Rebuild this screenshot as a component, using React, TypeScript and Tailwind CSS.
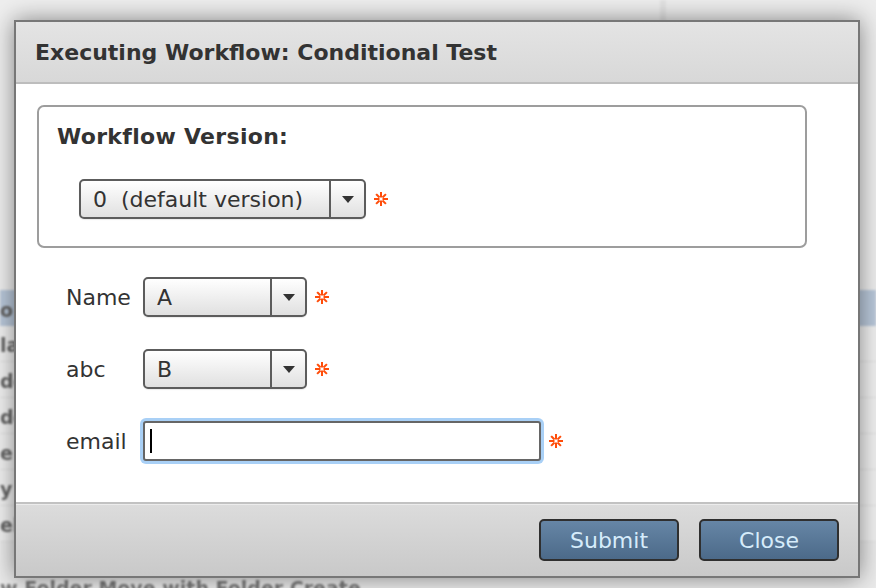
import React from 'react';

const font = { fontFamily: '"DejaVu Sans", Verdana, sans-serif' };

function Required() {
  return (
    <svg width="14" height="14" viewBox="0 0 14 14" className="ml-[8px] shrink-0">
      <g stroke="#ff4d0a" strokeWidth="2" strokeLinecap="square">
        <line x1="7" y1="1" x2="7" y2="4.5" />
        <line x1="7" y1="9.5" x2="7" y2="13" />
        <line x1="1" y1="7" x2="4.5" y2="7" />
        <line x1="9.5" y1="7" x2="13" y2="7" />
        <line x1="2.8" y1="2.8" x2="4.8" y2="4.8" />
        <line x1="9.2" y1="9.2" x2="11.2" y2="11.2" />
        <line x1="11.2" y1="2.8" x2="9.2" y2="4.8" />
        <line x1="4.8" y1="9.2" x2="2.8" y2="11.2" />
      </g>
    </svg>
  );
}

function Select({ value, width }: { value: string; width: string }) {
  return (
    <div className={`flex h-[40px] ${width} rounded-[5px] border-2 border-[#5c5c5c] bg-gradient-to-b from-white to-[#e0e0e0] shadow-[0_1px_1px_rgba(0,0,0,0.08)]`}>
      <div className="flex flex-1 items-center pl-[12px] text-[22px] text-[#333] whitespace-pre">{value}</div>
      <div className="flex w-[35px] items-center justify-center border-l-2 border-[#5c5c5c]">
        <svg width="12" height="7" viewBox="0 0 12 7">
          <path d="M0 0 H12 L6 7 Z" fill="#333" />
        </svg>
      </div>
    </div>
  );
}

const listRows = ['o', 'la', 'de', 'de', 'e', 'y', 'el'];

export default function App() {
  return (
    <div className="relative h-[588px] w-[876px] overflow-hidden bg-[#ececec]" style={font}>
      {/* page underneath */}
      <div className="flex h-full flex-col blur-[1px]">
        <div className="flex h-[290px] shrink-0">
          <div className="w-[660px] bg-[#eeeeee]" />
          <div className="w-[6px] bg-[#e3e3e3]" />
          <div className="flex-1 bg-[#ededed]" />
        </div>
        <div className="flex shrink-0 flex-col">
          {listRows.map((t, i) => (
            <div
              key={i}
              className={`flex h-[36px] shrink-0 items-center pt-[4px] text-[19px] font-bold text-[#666] ${i === 0 ? 'bg-[#b9c8da]' : 'border-b border-[#e0e0e0] bg-[#f0f0f0]'}`}
            >
              <span>{t}</span>
            </div>
          ))}
          <div className="h-[28px] shrink-0 bg-[#eaeaea]" />
          <div className="flex h-[36px] shrink-0 items-center text-[19px] font-bold text-[#777] bg-[#eaeaea]">
            <span>w Folder Move with Folder Create</span>
          </div>
        </div>
      </div>

      {/* dialog */}
      <div className="absolute left-[14px] top-[20px] flex h-[558px] w-[846px] flex-col border-2 border-[#777] bg-white shadow-[0_0_22px_rgba(0,0,0,0.45)]">
        <div className="flex h-[62px] items-center border-b-2 border-[#bdbdbd] bg-gradient-to-b from-[#e4e4e4] to-[#d8d8d8] pl-[19px]">
          <h1 className="text-[22px] font-bold text-[#333]">Executing Workflow: Conditional Test</h1>
        </div>

        <div className="flex flex-1 flex-col pl-[21px] pt-[21px]">
          <div className="flex h-[143px] w-[770px] flex-col rounded-[7px] border-2 border-[#9d9d9d] pl-[18px] pt-[16px]">
            <div className="text-[22px] font-bold leading-[28px] tracking-[0.3px] text-[#333]">Workflow Version:</div>
            <div className="ml-[22px] mt-[28px] flex items-center">
              <Select value="0  (default version)" width="w-[287px]" />
              <Required />
            </div>
          </div>

          <div className="ml-[29px] mt-[29px] flex flex-col gap-[32px]">
            <div className="flex items-center">
              <span className="w-[77px] text-[22px] text-[#333]">Name</span>
              <Select value="A" width="w-[164px]" />
              <Required />
            </div>
            <div className="flex items-center">
              <span className="w-[77px] text-[22px] text-[#333]">abc</span>
              <Select value="B" width="w-[164px]" />
              <Required />
            </div>
            <div className="flex items-center">
              <span className="w-[77px] text-[22px] text-[#333]">email</span>
              <div className="flex h-[40px] w-[398px] items-center rounded-[3px] border-2 border-[#666] bg-white pl-[5px] shadow-[0_0_0_3px_#a9d0f6]">
                <span className="h-[24px] w-[2px] bg-black" />
              </div>
              <Required />
            </div>
          </div>
        </div>

        <div className="flex h-[74px] items-center justify-end gap-[20px] border-t-2 border-[#c2c2c2] bg-gradient-to-b from-[#dcdcdc] to-[#c9c9c9] pr-[19px] shadow-[inset_0_1px_0_#ececec]">
          <button className="h-[42px] w-[140px] rounded-[5px] border-2 border-[#2f2f2f] bg-gradient-to-b from-[#6686a6] to-[#4c6a89] text-[22px] text-[#d6ecfb]">
            Submit
          </button>
          <button className="h-[42px] w-[140px] rounded-[5px] border-2 border-[#2f2f2f] bg-gradient-to-b from-[#6686a6] to-[#4c6a89] text-[22px] text-[#d6ecfb]">
            Close
          </button>
        </div>
      </div>
    </div>
  );
}
